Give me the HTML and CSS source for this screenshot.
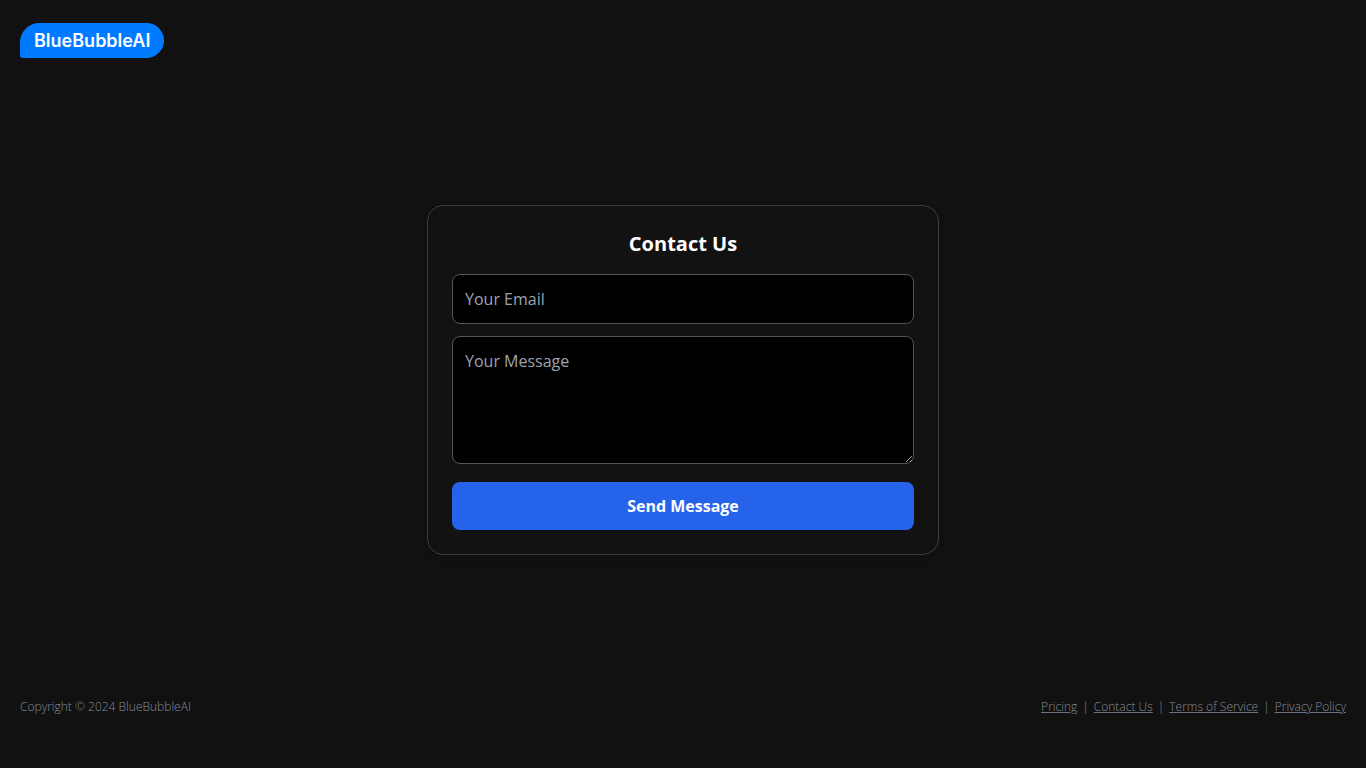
FILE: index.html
```
<!DOCTYPE html>
<html lang="en">
<head>
    <meta charset="UTF-8">
    <meta name="viewport" content="width=device-width, initial-scale=1.0">
    <title>Contact Us - BlueBubbleAI</title>
    <link rel="stylesheet" href="styles.css">
</head>
<body>
    <header class="header">
        <a href="/" class="logo">BlueBubbleAI</a>
    </header>

    <main class="main">
        <form class="card">
            <h1>Contact Us</h1>
            <input type="email" name="email" class="field" placeholder="Your Email" aria-label="Your Email" required>
            <textarea name="message" class="field message" placeholder="Your Message" aria-label="Your Message" required></textarea>
            <button type="submit">Send Message</button>
        </form>
    </main>

    <footer class="footer">
        <p>Copyright © 2024 BlueBubbleAI</p>
        <nav class="footer-links">
            <a href="/pricing">Pricing</a>
            <span>|</span>
            <a href="/contact">Contact Us</a>
            <span>|</span>
            <a href="/terms">Terms of Service</a>
            <span>|</span>
            <a href="/privacy">Privacy Policy</a>
        </nav>
    </footer>
</body>
</html>
```
FILE: styles.css
```
* {
    box-sizing: border-box;
}
body {
    display: flex;
    flex-direction: column;
    min-height: 100vh;
    margin: 0;
    background-color: #111;
    color: #fff;
    font-family: "Open Sans", sans-serif;
    font-size: 16px;
    line-height: 24px;
}
.header {
    display: flex;
    align-items: center;
    height: 80px;
    padding: 0 20px;
}
.logo {
    padding: 6px 14px 5px;
    border-radius: 20px 18px 18px 3px;
    background-color: #007aff;
    color: #fff;
    font-family: Inter, sans-serif;
    font-size: 18px;
    font-weight: 600;
    text-decoration: none;
}
.main {
    display: flex;
    flex: 1;
    align-items: center;
    justify-content: center;
}
.card {
    display: flex;
    flex-direction: column;
    width: 100%;
    max-width: 512px;
    padding: 24px;
    border: 1px solid #3b3d46;
    border-radius: 16px;
    background-color: #121212;
    box-shadow: 0 4px 6px rgba(0, 0, 0, 0.1);
}
h1 {
    margin: 0 0 16px;
    font-size: 20px;
    line-height: 28px;
    font-weight: 700;
    text-align: center;
}
.field {
    width: 100%;
    margin: 0 0 12px;
    padding: 12px;
    border: 1px solid #50545e;
    border-radius: 8px;
    background-color: #000;
    color: #fff;
    font: inherit;
}
.field::placeholder {
    color: #9ca3af;
}
.message {
    height: 128px;
    margin-bottom: 18px;
    resize: vertical;
}
button {
    padding: 12px;
    border: none;
    border-radius: 8px;
    background-color: #2563eb;
    color: #fff;
    font: inherit;
    font-weight: 700;
    cursor: pointer;
}
button:hover {
    background-color: #1d4ed8;
}
.footer {
    display: flex;
    justify-content: space-between;
    padding: 16px 20px 50px;
    color: #868c98;
    font-size: 12px;
    line-height: 22px;
    font-weight: 300;
}
.footer p {
    margin: 0;
}
.footer-links {
    display: flex;
    gap: 5px;
}
.footer-links a {
    color: inherit;
    text-decoration-color: #6b7280;
}
```
